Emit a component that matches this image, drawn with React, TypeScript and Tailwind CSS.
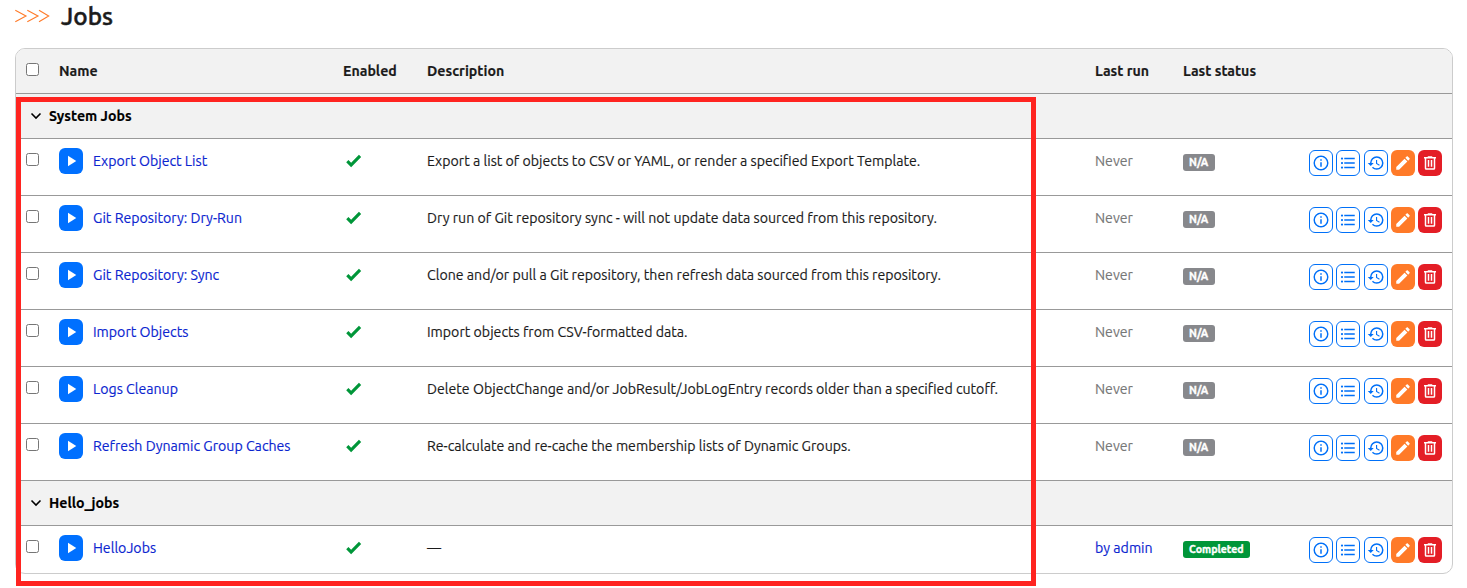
const ICONS = {
  info: "M11,9H13V7H11M12,20C7.59,20 4,16.41 4,12C4,7.59 7.59,4 12,4C16.41,4 20,7.59 20,12C20,16.41 16.41,20 12,20M12,2A10,10 0 0,0 2,12A10,10 0 0,0 12,22A10,10 0 0,0 22,12A10,10 0 0,0 12,2M11,17H13V11H11V17Z",
  list: "M7,5H21V7H7V5M7,13V11H21V13H7M4,4.5A1.5,1.5 0 0,1 5.5,6A1.5,1.5 0 0,1 4,7.5A1.5,1.5 0 0,1 2.5,6A1.5,1.5 0 0,1 4,4.5M4,10.5A1.5,1.5 0 0,1 5.5,12A1.5,1.5 0 0,1 4,13.5A1.5,1.5 0 0,1 2.5,12A1.5,1.5 0 0,1 4,10.5M7,19V17H21V19H7M4,16.5A1.5,1.5 0 0,1 5.5,18A1.5,1.5 0 0,1 4,19.5A1.5,1.5 0 0,1 2.5,18A1.5,1.5 0 0,1 4,16.5Z",
  history:
    "M13.5,8H12V13L16.28,15.54L17,14.33L13.5,12.25V8M13,3A9,9 0 0,0 4,12H1L4.96,16.03L9,12H6A7,7 0 0,1 13,5A7,7 0 0,1 20,12A7,7 0 0,1 13,19C11.07,19 9.32,18.21 8.06,16.94L6.64,18.36C8.27,20 10.5,21 13,21A9,9 0 0,0 22,12A9,9 0 0,0 13,3",
  pencil:
    "M20.71,7.04C21.1,6.65 21.1,6 20.71,5.63L18.37,3.29C18,2.9 17.35,2.9 16.96,3.29L15.12,5.12L18.87,8.87M3,17.25V21H6.75L17.81,9.93L14.06,6.18L3,17.25Z",
  trash:
    "M9,3V4H4V6H5V19A2,2 0 0,0 7,21H17A2,2 0 0,0 19,19V6H20V4H15V3H9M7,6H17V19H7V6M9,8V17H11V8H9M13,8V17H15V8H13Z",
  check: "M9,20.42L2.79,14.21L5.62,11.38L9,14.77L18.88,4.88L21.71,7.71L9,20.42Z",
  play: "M8,5.14V19.14L19,12.14L8,5.14Z",
};

function Icon({ name, className = "size-[18px]" }: { name: keyof typeof ICONS; className?: string }) {
  return (
    <svg viewBox="0 0 24 24" fill="currentColor" className={`shrink-0 ${className}`}>
      <path d={ICONS[name]} />
    </svg>
  );
}

type Job = { name: string; desc: string; done?: boolean };

const systemJobs: Job[] = [
  { name: "Export Object List", desc: "Export a list of objects to CSV or YAML, or render a specified Export Template." },
  { name: "Git Repository: Dry-Run", desc: "Dry run of Git repository sync - will not update data sourced from this repository." },
  { name: "Git Repository: Sync", desc: "Clone and/or pull a Git repository, then refresh data sourced from this repository." },
  { name: "Import Objects", desc: "Import objects from CSV-formatted data." },
  { name: "Logs Cleanup", desc: "Delete ObjectChange and/or JobResult/JobLogEntry records older than a specified cutoff." },
  { name: "Refresh Dynamic Group Caches", desc: "Re-calculate and re-cache the membership lists of Dynamic Groups." },
];
const helloJobs: Job[] = [{ name: "HelloJobs", desc: "—", done: true }];

const GRID = "grid grid-cols-[43px_284px_84px_668px_88px_126px_133px]";

function Checkbox() {
  return <input type="checkbox" className="ml-2.5 block size-[13px] appearance-none rounded-[2.5px] border border-[#767676] bg-white" />;
}

function Group({ title }: { title: string }) {
  return (
    <div className="flex h-[45px] items-center border-b border-[#999] bg-[#f2f2f2] pl-[14px] font-bold text-black">
      <svg viewBox="0 0 12 12" className="mr-[7px] size-3" fill="none" stroke="black" strokeWidth="1.6">
        <path d="M1.5 3.5 6 8l4.500-4.500" />
      </svg>
      <span>{title}</span>
    </div>
  );
}

function Row({ job, last }: { job: Job; last?: boolean }) {
  const outline = "flex h-[26px] w-6 items-center justify-center rounded-md border border-[#0070f8] bg-white text-[#0070f8]";
  return (
    <div className={`${GRID} ${last ? "h-[47px]" : "h-[57px] border-b border-[#999]"}`}>
      <div className="pt-[14px]"><Checkbox /></div>
      <div className="flex items-start pt-[9px] text-[#0b25d0]">
        <button className="mr-2.5 flex h-[26px] w-6 items-center justify-center rounded-md bg-[#0070ff] text-white">
          <Icon name="play" />
        </button>
        <a className="pt-[3px]">{job.name}</a>
      </div>
      <div className="pt-3 pl-px text-[#009639]"><Icon name="check" className="size-[19px]" /></div>
      <div className="pt-3 whitespace-nowrap">{job.desc}</div>
      <div className="pt-3">
        {job.done ? <a className="text-[#0b25d0]">by admin</a> : <span className="text-[#777]">Never</span>}
      </div>
      <div className="pt-[15px]">
        <span
          className={`flex h-[17px] items-center rounded-[3px] pb-px pl-1.5 text-[10.6px] leading-4 font-bold text-white [-webkit-text-stroke:0.35px] ${
            job.done ? "w-[67px] bg-[#009639]" : "w-8 bg-[#87888c]"
          }`}
        >
          {job.done ? "Completed" : "N/A"}
        </span>
      </div>
      <div className="flex justify-between pt-[11px]">
        <button className={outline}><Icon name="info" /></button>
        <button className={outline}><Icon name="list" /></button>
        <button className={outline}><Icon name="history" /></button>
        <button className="flex h-[26px] w-6 items-center justify-center rounded-md bg-[#ff7a28] text-white"><Icon name="pencil" /></button>
        <button className="flex h-[26px] w-6 items-center justify-center rounded-md bg-[#e41e26] text-white"><Icon name="trash" /></button>
      </div>
    </div>
  );
}

export default function App() {
  return (
    <div className="relative h-[588px] w-[1467px] overflow-hidden bg-white pl-[15px] font-['Ubuntu','Noto_Sans',sans-serif] text-[14.16px] leading-5 text-[#1b1b1b] [-webkit-text-stroke:0.15px]">
      <header className="flex h-12 items-start">
        <svg viewBox="0 0 35 14" className="mt-[9px] mr-[11px] h-[14px] w-[35px]" fill="none" stroke="#ff7a28" strokeWidth="1.1">
          <path d="M.3 1.200 11 7 .3 12.800M12.300 1.200 23 7 12.300 12.800M24 1.200 33.700 7 24 12.800" />
        </svg>
        <h1 className="text-[24.3px] leading-8 font-medium [-webkit-text-stroke:0.5px]">Jobs</h1>
      </header>
      <div className="h-[526px] w-[1438px] overflow-hidden rounded-[10px] border border-[#ccc] bg-white">
        <div className={`${GRID} h-[45px] items-center border-b border-[#999] bg-[#f2f2f2] font-bold`}>
          <div className="pb-[3px]"><Checkbox /></div>
          <span>Name</span>
          <span>Enabled</span>
          <span>Description</span>
          <span>Last run</span>
          <span>Last status</span>
        </div>
        <Group title="System Jobs" />
        {systemJobs.map((job) => <Row key={job.name} job={job} />)}
        <Group title="Hello_jobs" />
        {helloJobs.map((job) => <Row key={job.name} job={job} last />)}
      </div>
      <div className="pointer-events-none absolute top-[97px] left-4 h-[489px] w-[1020px] border-[5px] border-[#ff2420]" />
    </div>
  );
}
